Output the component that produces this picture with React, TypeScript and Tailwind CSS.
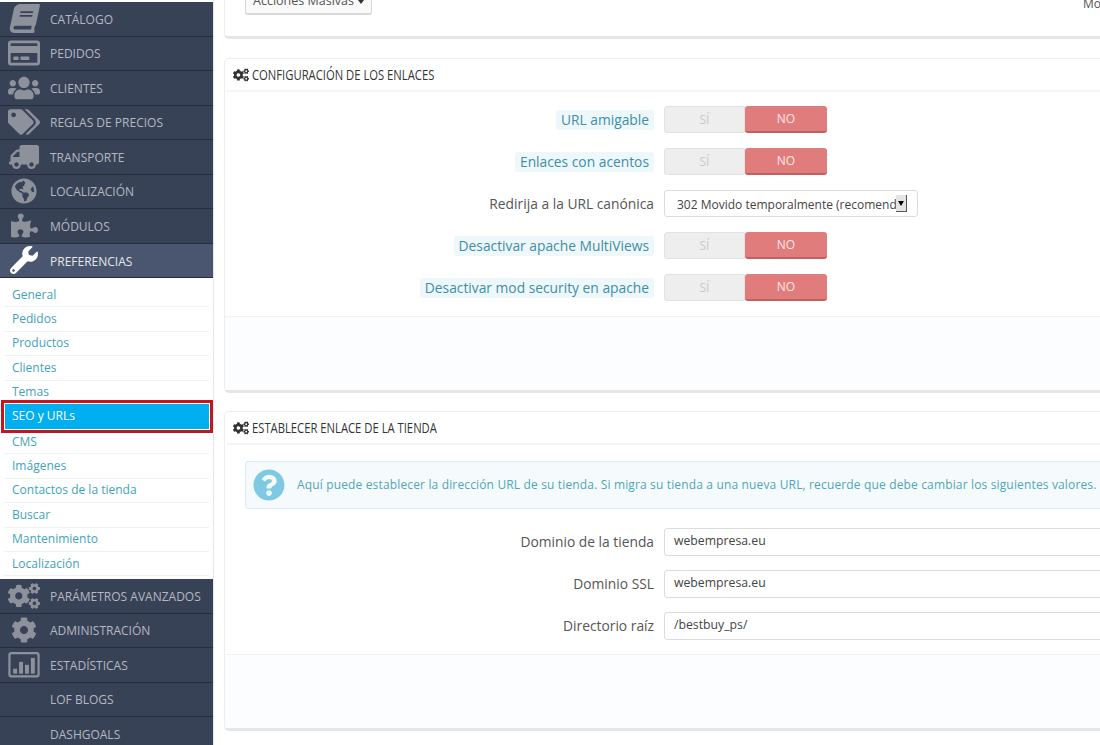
import React from 'react';
import {
  FaBook,
  FaRegCreditCard,
  FaUsers,
  FaTags,
  FaTruck,
  FaGlobeAmericas,
  FaPuzzlePiece,
  FaWrench,
  FaCogs,
  FaCog,
  FaQuestionCircle,
} from 'react-icons/fa';

const ChartIcon = ({ size }: { size: number }) => (
  <svg width={size} height={size * 0.8} viewBox="0 0 32 26" fill="currentColor">
    <rect x="1.2" y="1.2" width="29.6" height="23.6" rx="2" fill="none" stroke="currentColor" strokeWidth="2.2" />
    <rect x="5" y="17" width="4" height="5" />
    <rect x="11" y="10" width="4" height="12" />
    <rect x="17" y="13" width="4" height="9" />
    <rect x="23" y="6" width="4" height="16" />
  </svg>
);

const topMenu = [
  { label: 'CATÁLOGO', icon: <FaBook size={29} className="-skew-x-12" /> },
  { label: 'PEDIDOS', icon: <FaRegCreditCard size={32} /> },
  { label: 'CLIENTES', icon: <FaUsers size={32} /> },
  { label: 'REGLAS DE PRECIOS', icon: <FaTags size={32} /> },
  { label: 'TRANSPORTE', icon: <FaTruck size={30} className="-scale-x-100" /> },
  { label: 'LOCALIZACIÓN', icon: <FaGlobeAmericas size={26} /> },
  { label: 'MÓDULOS', icon: <FaPuzzlePiece size={27} /> },
];

const subMenu = ['General', 'Pedidos', 'Productos', 'Clientes', 'Temas', 'SEO y URLs', 'CMS', 'Imágenes', 'Contactos de la tienda', 'Buscar', 'Mantenimiento', 'Localización'];

const bottomMenu = [
  { label: 'PARÁMETROS AVANZADOS', icon: <FaCogs size={32} /> },
  { label: 'ADMINISTRACIÓN', icon: <FaCog size={26} /> },
  { label: 'ESTADÍSTICAS', icon: <ChartIcon size={32} /> },
  { label: 'LOF BLOGS', icon: null },
  { label: 'DASHGOALS', icon: null },
];

const MenuItem = ({ label, icon, active }: { label: string; icon: React.ReactNode; active?: boolean }) => (
  <div className={`h-[34.5px] shrink-0 flex items-center border-b border-[#262d3c] ${active ? 'bg-[#4a566f] text-[#e4e6ea]' : 'bg-[#384257] text-[#b4b8c1]'}`}>
    <div className={`w-[50px] shrink-0 flex justify-center pr-[2px] ${active ? 'text-white' : 'text-[#8d919b]'}`}>{icon}</div>
    <span className={`text-[12px] whitespace-nowrap ${active ? 'pt-[3px]' : 'pt-[2px]'}`}>{label}</span>
  </div>
);

const Toggle = () => (
  <div className="flex w-[163px] h-[27px] text-[12px]">
    <div className="w-[81px] bg-[#eeeeee] border border-[#e2e2e2] rounded-l-[3px] text-[#c9c9c9] flex items-center justify-center">SÍ</div>
    <div className="w-[82px] bg-[#e07c7c] border-b-2 border-[#c45f5f] rounded-[3px] text-[#fbeaea] flex items-center justify-center">NO</div>
  </div>
);

const FormRow = ({ label, hint, children }: { label: string; hint?: boolean; children: React.ReactNode }) => (
  <div className="flex items-center h-[27px]">
    <div className="w-[429px] shrink-0 flex justify-end">
      <span className={hint ? 'bg-[#eef8fb] text-[#3f8ea5] px-[5px] rounded-[3px] text-[13.8px] leading-[20px]' : 'text-[#555] text-[13.8px] leading-[20px]'}>{label}</span>
    </div>
    <div className="ml-[10px]">{children}</div>
  </div>
);

const TextField = ({ value }: { value: string }) => (
  <div className="w-[600px] h-[28px] px-[9px] flex items-center bg-white border border-[#d9dde0] rounded-[3px] text-[12.25px] text-[#444]">{value}</div>
);

const Panel = ({ title, children }: { title: string; children: React.ReactNode }) => (
  <section className="w-[1000px] bg-white border border-[#eeeeee] border-b-[3px] border-b-[#e6e6e6] rounded-[5px]">
    <header className="h-[33px] mx-[2px] flex items-center gap-[3px] pl-[6px] border-b-2 border-[#f4f4f4] text-[#333]">
      <FaCogs size={16} />
      <h2 className="text-[15px] origin-left scale-x-[0.75] whitespace-nowrap">{title}</h2>
    </header>
    {children}
  </section>
);

export default function App() {
  return (
    <div className="w-[1100px] h-[745px] overflow-hidden flex bg-white font-['Open_Sans',sans-serif]">
      {/* sidebar */}
      <aside className="w-[214px] shrink-0 flex flex-col border-r border-[#e4e6ea] overflow-hidden pt-[2px]">
        {topMenu.map(m => <MenuItem key={m.label} {...m} />)}
        <MenuItem label="PREFERENCIAS" icon={<FaWrench size={28} />} active />
        <ul className="h-[301px] shrink-0 pt-[5px] bg-white text-[12px]">
          {subMenu.map(s => s === 'SEO y URLs' ? (
            <li key={s} className="h-[33px] -mt-[5px] -mb-[3px] border-[3px] border-[#c4161f] ml-[1px] p-[1px] relative">
              <div className="h-[25px] bg-[#00aff0] text-white pl-[7px] flex items-center">{s}</div>
            </li>
          ) : (
            <li key={s} className="h-[24.4px] mx-[4px] pl-[8px] flex items-center border-b border-[#eef3f4] text-[#3fa4bb]">{s}</li>
          ))}
        </ul>
        {bottomMenu.map(m => <MenuItem key={m.label} {...m} />)}
      </aside>

      {/* content */}
      <main className="flex-1 min-w-0 pl-[10px] -mt-[20px] flex flex-col">
        <div className="h-[59px] shrink-0 w-[1000px] bg-white border-x border-[#eeeeee] border-b-[3px] border-b-[#e6e6e6] rounded-b-[5px] pl-[20px] flex">
          <div className="w-[127px] h-[35px] shrink-0 flex items-end justify-center pb-[2px] gap-[4px] bg-[#fafafa] border border-[#d8d8d8] border-b-2 rounded-[3px] text-[12.5px] text-[#555] whitespace-nowrap">
            Acciones Masivas
            <span className="mb-[7px] border-x-[3.5px] border-x-transparent border-t-[4px] border-t-[#333]" />
          </div>
          <span className="text-[12px] text-[#555] mt-[15px] ml-[711px] whitespace-nowrap">Mostrar</span>
        </div>

        <div className="h-[19px] shrink-0" />

        <Panel title="CONFIGURACIÓN DE LOS ENLACES">
          <div className="pt-[14px] flex flex-col gap-[15px]">
            <FormRow label="URL amigable" hint><Toggle /></FormRow>
            <FormRow label="Enlaces con acentos" hint><Toggle /></FormRow>
            <FormRow label="Redirija a la URL canónica">
              <div className="w-[254px] h-[27px] pl-[12px] pr-[10px] flex items-center justify-between bg-white border border-[#d9dde0] rounded-[3px] text-[12px] text-[#444] whitespace-nowrap overflow-hidden">
                <span className="overflow-hidden w-[220px] pt-[2px]">302 Movido temporalmente (recomendado)</span>
                <span className="w-[11px] h-[17px] shrink-0 flex items-center justify-center bg-[#e4e4e4] border-r border-b border-[#555]">
                  <span className="border-x-[3.5px] border-x-transparent border-t-[5px] border-t-black" />
                </span>
              </div>
            </FormRow>
            <FormRow label="Desactivar apache MultiViews" hint><Toggle /></FormRow>
            <FormRow label="Desactivar mod security en apache" hint><Toggle /></FormRow>
          </div>
          <div className="h-[74px] mt-[15px] bg-[#fcfdfe] border-t border-[#eef2f4]" />
        </Panel>

        <div className="h-[18px] shrink-0" />

        <Panel title="ESTABLECER ENLACE DE LA TIENDA">
          <div className="ml-[20px] mt-[16px] h-[48px] flex items-center gap-[12px] pl-[7px] bg-[#f5fbfd] border border-[#dcecf1] rounded-[3px] text-[12px] tracking-[0.15px] text-[#4fa6b8] whitespace-nowrap">
            <FaQuestionCircle size={32} className="text-[#7fc9e2] shrink-0" />
            Aquí puede establecer la dirección URL de su tienda. Si migra su tienda a una nueva URL, recuerde que debe cambiar los siguientes valores.
          </div>
          <div className="pt-[19px] flex flex-col gap-[15px]">
            <FormRow label="Dominio de la tienda"><TextField value="webempresa.eu" /></FormRow>
            <FormRow label="Dominio SSL"><TextField value="webempresa.eu" /></FormRow>
            <FormRow label="Directorio raíz"><TextField value="/bestbuy_ps/" /></FormRow>
          </div>
          <div className="h-[74px] mt-[15px] bg-[#fcfdfe] border-t border-[#eef2f4]" />
        </Panel>
      </main>
    </div>
  );
}
